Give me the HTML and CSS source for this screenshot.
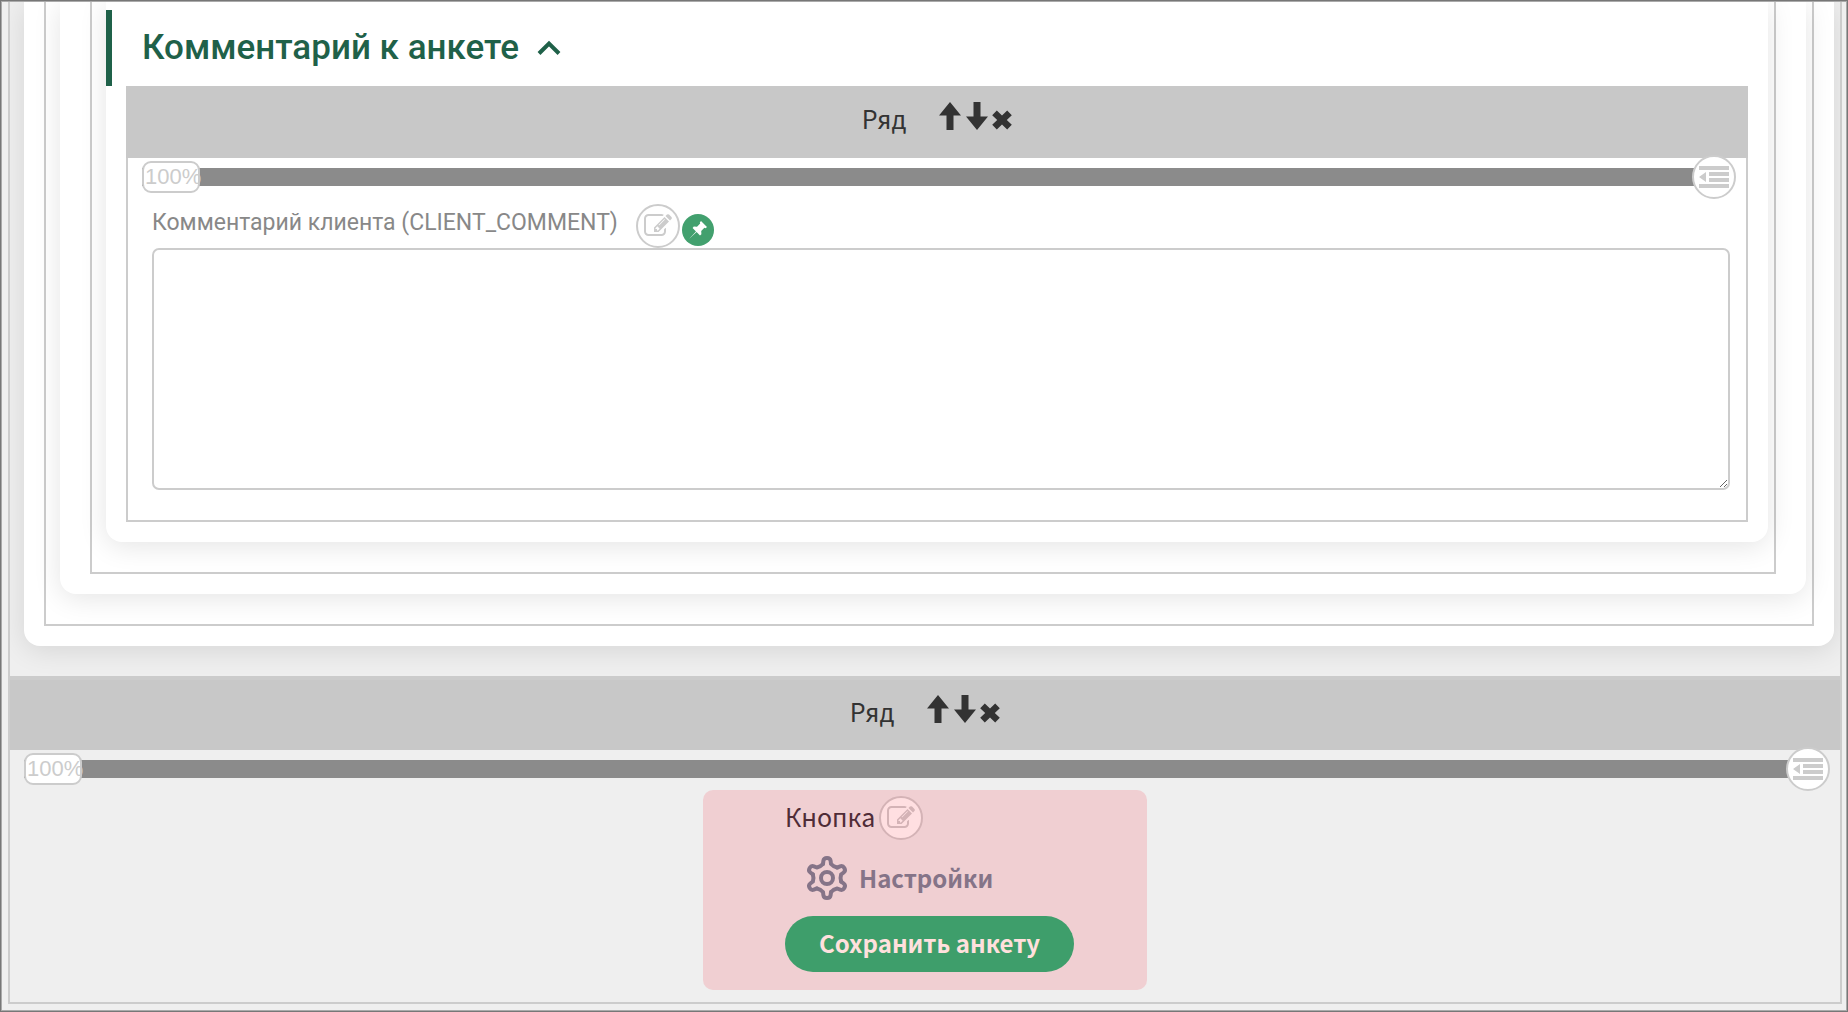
FILE: index.html
```
<!DOCTYPE html>
<html lang="ru">
<head>
  <meta charset="UTF-8">
  <meta name="viewport" content="width=device-width, initial-scale=1.0">
  <title>Комментарий к анкете</title>
  <link rel="stylesheet" href="styles.css">
</head>
<body>

  <!-- Shared icons -->
  <svg class="sprite" aria-hidden="true">
    <symbol id="arrow-up" viewBox="0 0 22 28">
      <path d="M11 0L22 13.5H14.5V28H7.5V13.5H0z"/>
    </symbol>
    <symbol id="arrow-down" viewBox="0 0 22 28">
      <path d="M11 28L22 14.5H14.5V0H7.5V14.5H0z"/>
    </symbol>
    <symbol id="cross" viewBox="0 0 20 20">
      <path d="M4.8 0.6L10 5.6 15.2 0.6 19.8 5.2 14.8 10 19.8 14.8 15.2 19.4 10 14.4 4.8 19.4 0.2 14.8 5.2 10 0.2 5.2z"/>
    </symbol>
    <symbol id="outdent" viewBox="0 0 30 22">
      <path d="M0 0h30v4H0zM10 6h20v4H10zM10 12h20v4H10zM0 18h30v4H0zM7 6v10L0 11z"/>
    </symbol>
    <symbol id="edit" viewBox="0 0 1792 1792">
      <path d="M888 1184l116-116-152-152-116 116v56h96v96h56zm440-720q-16-16-33 1l-350 350q-17 17-1 33t33-1l350-350q17-17 1-33zm80 594v190q0 119-84.5 203.5t-203.5 84.5h-832q-119 0-203.5-84.5t-84.5-203.5v-832q0-119 84.5-203.5t203.5-84.5h832q63 0 117 25 15 7 18 23 3 17-9 29l-49 49q-14 14-32 8-23-6-45-6h-832q-66 0-113 47t-47 113v832q0 66 47 113t113 47h832q66 0 113-47t47-113v-126q0-13 9-22l64-64q15-15 35-7t20 29zm-96-738l288 288-672 672h-288v-288zm444 132l-92 92-288-288 92-92q28-28 68-28t68 28l152 152q28 28 28 68t-28 68z"/>
    </symbol>
    <symbol id="pin" viewBox="0 0 20 20">
      <path d="M13 1L19 7 17.6 8.2 16.4 7.8 13.2 11 13.4 14.2 12 15.4 8.6 12 1 19 8 11.4 4.6 8 5.8 6.6 9 6.8 12.2 3.6 11.8 2.4z"/>
    </symbol>
    <symbol id="gear" viewBox="0 0 44 44">
      <g fill="none" stroke="currentColor" stroke-width="4" stroke-linecap="round">
        <path id="tooth" d="M18 8L18.4 4.8Q18.8 2 22 2Q25.2 2 25.6 4.8L26 8Q28.5 10.8 32.1 11.5"/>
        <use href="#tooth" transform="rotate(60 22 22)"/>
        <use href="#tooth" transform="rotate(120 22 22)"/>
        <use href="#tooth" transform="rotate(180 22 22)"/>
        <use href="#tooth" transform="rotate(240 22 22)"/>
        <use href="#tooth" transform="rotate(300 22 22)"/>
        <circle cx="22" cy="22" r="6"/>
      </g>
    </symbol>
  </svg>

  <main class="page">
    <div class="column">
      <section class="card">
        <div class="grid column">
          <section class="card card-wide">
            <div class="grid column">
              <section class="card card-titled">
                <h2 class="card-title">
                  Комментарий к анкете
                  <button class="toggle" type="button" aria-label="Свернуть">
                    <svg width="24" height="16" viewBox="0 0 24 16"><path d="M2 13.5L12 3.5l10 10" fill="none" stroke="currentColor" stroke-width="4"/></svg>
                  </button>
                </h2>

                <div class="grid">
                  <div class="row-header">
                    <span>Ряд</span>
                    <div class="row-actions">
                      <button type="button" aria-label="Вверх"><svg width="24" height="28"><use href="#arrow-up"/></svg></button>
                      <button type="button" aria-label="Вниз"><svg width="24" height="28"><use href="#arrow-down"/></svg></button>
                      <button type="button" aria-label="Удалить"><svg width="20" height="20"><use href="#cross"/></svg></button>
                    </div>
                  </div>
                  <div class="slider">
                    <input class="range" id="width1" type="range" min="0" max="12" value="0" aria-label="Ширина">
                    <output class="percent" for="width1">100%</output>
                    <button class="round" type="button" aria-label="Отступ"><svg width="30" height="22"><use href="#outdent"/></svg></button>
                  </div>
                  <div class="field">
                    <div class="field-header">
                      <label for="comment">Комментарий клиента (CLIENT_COMMENT)</label>
                      <button class="round" type="button" aria-label="Редактировать"><svg width="28" height="28"><use href="#edit"/></svg></button>
                      <button class="pin" type="button" aria-label="Закрепить"><svg width="20" height="20"><use href="#pin"/></svg></button>
                    </div>
                    <textarea id="comment"></textarea>
                  </div>
                </div>
              </section>
            </div>
          </section>
        </div>
      </section>
    </div>

    <div class="row-header row-header-outer">
      <span>Ряд</span>
      <div class="row-actions">
        <button type="button" aria-label="Вверх"><svg width="24" height="28"><use href="#arrow-up"/></svg></button>
        <button type="button" aria-label="Вниз"><svg width="24" height="28"><use href="#arrow-down"/></svg></button>
        <button type="button" aria-label="Удалить"><svg width="20" height="20"><use href="#cross"/></svg></button>
      </div>
    </div>
    <div class="slider">
      <input class="range" id="width2" type="range" min="0" max="12" value="0" aria-label="Ширина">
      <output class="percent" for="width2">100%</output>
      <button class="round" type="button" aria-label="Отступ"><svg width="30" height="22"><use href="#outdent"/></svg></button>
    </div>

    <div class="button-block">
      <div class="button-header">
        <span>Кнопка</span>
        <button class="round" type="button" aria-label="Редактировать"><svg width="28" height="28"><use href="#edit"/></svg></button>
      </div>
      <button class="settings" type="button">
        <svg width="44" height="44"><use href="#gear"/></svg>
        Настройки
      </button>
      <button class="save" type="submit">Сохранить анкету</button>
    </div>
  </main>

</body>
</html>
```
FILE: styles.css
```
* {
  box-sizing: border-box;
}

body {
  margin: 0;
  min-height: 100vh;
  display: flex;
  padding: 0 4px 6px 6px;
  border: 1px solid #777;
  outline: 1px solid #aaa;
  outline-offset: -2px;
  background-color: #efefef;
  color: #333;
  font-family: "Noto Sans CJK SC", "Noto Sans", sans-serif;
  font-size: 25px;
  line-height: 32px;
}

button {
  display: flex;
  align-items: center;
  justify-content: center;
  padding: 0;
  border: none;
  background: none;
  color: inherit;
  font: inherit;
  cursor: pointer;
}

svg {
  display: block;
  fill: currentColor;
}

.sprite {
  position: absolute;
  width: 0;
  height: 0;
}

.page {
  flex: 1;
  margin: 1px;
  border: 2px solid #ccc;
  border-top: none;
  overflow: hidden;
}

.column {
  padding: 0 6px 30px 14px;
}

.card {
  padding: 0 20px 20px;
  border-radius: 0 0 16px 16px;
  background-color: #fff;
  box-shadow: 0 4px 28px rgba(0, 0, 0, 0.11);
}

.card-wide {
  padding: 0 30px 20px;
}

.card-titled {
  padding-top: 8px;
}

.grid {
  border: 2px solid #ccc;
  border-top: none;
}

.card-title {
  display: flex;
  align-items: center;
  gap: 18px;
  height: 76px;
  margin: 0 -20px;
  padding: 0 30px;
  border-left: 6px solid #1f6149;
  color: #1f6149;
  font-family: Roboto, sans-serif;
  font-size: 35px;
  font-weight: 500;
}

.row-header {
  display: flex;
  align-items: center;
  justify-content: center;
  gap: 32px;
  height: 72px;
  padding-bottom: 8px;
  background-color: #c8c8c8;
}

.card .row-header {
  margin: 0 -2px;
}

.row-header-outer {
  height: 74px;
  border-top: 4px solid #ccc;
}

.row-actions {
  display: flex;
  align-items: flex-end;
  gap: 3px;
  padding-bottom: 4px;
}

/* Column width slider */
.slider {
  position: relative;
  display: flex;
  align-items: center;
  height: 34px;
  margin: 2px 10px 0 14px;
}

.range {
  flex: 1;
  height: 34px;
  margin: 0 -10px 0 0;
  background: none;
  appearance: none;
}

.range::-webkit-slider-runnable-track {
  height: 18px;
  background-color: #8b8b8b;
}

.range::-webkit-slider-thumb {
  appearance: none;
  width: 58px;
  height: 32px;
  margin-top: -7px;
  border: 2px solid #ccc;
  border-radius: 9px;
  background-color: #fff;
}

.percent {
  position: absolute;
  left: 3px;
  color: #ccc;
  font-family: "Liberation Sans", Arial, sans-serif;
  font-size: 22px;
  pointer-events: none;
}

.round {
  position: relative;
  flex: none;
  width: 44px;
  height: 44px;
  border: 2px solid #ccc;
  border-radius: 50%;
  background-color: #fff;
  color: #ccc;
}

.field {
  padding: 10px 16px 30px 24px;
}

.field-header {
  display: flex;
  align-items: center;
  color: #888;
  font-family: Roboto, sans-serif;
  font-size: 23px;
}

.field-header label {
  margin-right: 18px;
  padding-bottom: 6px;
}

.pin {
  width: 32px;
  height: 32px;
  margin: 8px 0 0 2px;
  border-radius: 50%;
  background-color: #42a06e;
  color: #fff;
}

textarea {
  display: block;
  width: 100%;
  height: 242px;
  border: 2px solid #ccc;
  border-radius: 7px;
  background-color: #fff;
  font: inherit;
}

/* Button preview */
.button-block {
  display: flex;
  flex-direction: column;
  align-items: flex-start;
  gap: 16px;
  width: 100%;
  max-width: 444px;
  margin: 4px auto 12px;
  padding: 6px 20px 18px 82px;
  border-radius: 10px;
  background-color: #f0cfd2;
}

.button-header {
  display: flex;
  align-items: center;
  gap: 4px;
  color: #4f2c37;
}

.button-header span {
  padding-bottom: 4px;
}

.button-header .round {
  border-color: #d4b3b6;
  background-color: #ffdfe1;
  color: #d4b3b6;
}

.settings {
  gap: 10px;
  margin-left: 20px;
  color: #857488;
  font-size: 24px;
  font-weight: 600;
}

.save {
  height: 56px;
  padding: 0 34px 2px;
  border-radius: 28px;
  background-color: #3e9e6b;
  color: #ffe0dd;
  font-size: 24px;
  font-weight: 700;
}
```
